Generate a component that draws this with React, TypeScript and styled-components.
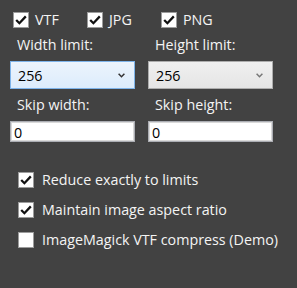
import styled, { createGlobalStyle } from 'styled-components';

const GlobalStyle = createGlobalStyle`
  html, body {
    margin: 0;
    padding: 0;
    background: #424242;
  }
  body {
    font-family: 'Open Sans', 'Noto Sans', sans-serif;
  }
`;

const Panel = styled.div`
  width: 297px;
  height: 288px;
  box-sizing: border-box;
  padding: 12px 0 0 10px;
  background: #424242;
  color: #f4f4f4;
  font-size: 14.3px;
  display: flex;
  flex-direction: column;
`;

const TopChecks = styled.div`
  display: flex;
  padding-left: 3px;
`;

const Check = styled.label<{ $gap: number; $width?: number }>`
  display: flex;
  align-items: center;
  height: 16px;
  line-height: 20px;
  gap: ${(p) => p.$gap}px;
  width: ${(p) => (p.$width ? `${p.$width}px` : 'auto')};
  white-space: nowrap;
`;

const Box = styled.span`
  width: 16px;
  height: 16px;
  box-sizing: border-box;
  border: 1px solid #9c9c9c;
  background: #ffffff;
  display: flex;
  align-items: center;
  justify-content: center;
  flex: none;
`;

const Fields = styled.div`
  display: grid;
  grid-template-columns: 125px 125px;
  column-gap: 13px;
  margin-top: 7px;
`;

const Field = styled.div`
  display: flex;
  flex-direction: column;
`;

const Label = styled.div<{ $top?: number }>`
  line-height: 20px;
  padding-left: 7px;
  margin-top: ${(p) => p.$top ?? 0}px;
  margin-bottom: 6px;
`;

const Combo = styled.div<{ $focused?: boolean }>`
  height: 28px;
  box-sizing: border-box;
  display: flex;
  align-items: center;
  justify-content: space-between;
  padding: 0 9px 0 7px;
  color: #000;
  border: 1px solid ${(p) => (p.$focused ? '#7eb4ea' : '#adadad')};
  background: ${(p) =>
    p.$focused
      ? 'linear-gradient(#ecf4fc, #dcecfc)'
      : 'linear-gradient(#f0f0f0, #e5e5e5)'};
`;

const TextBox = styled.div`
  height: 21px;
  box-sizing: border-box;
  border: 1px solid #abadb3;
  box-shadow: inset 0 0 0 1px #d9d9d9;
  background: #ffffff;
  color: #000;
  padding: 1px 0 0 3px;
  line-height: 20px;
`;

const Options = styled.div`
  display: flex;
  flex-direction: column;
  gap: 14px;
  margin-top: 30px;
  padding-left: 8px;
`;

const Tick = () => (
  <svg width="12" height="10" viewBox="0 0 12 10">
    <path d="M1.2 5 L4.4 8.2 L10.8 1.4" fill="none" stroke="#111" strokeWidth="2.3" />
  </svg>
);

const Chevron = ({ color }: { color: string }) => (
  <svg width="7" height="5" viewBox="0 0 7 5">
    <path d="M0.6 0.8 L3.5 3.7 L6.4 0.8" fill="none" stroke={color} strokeWidth="1.5" />
  </svg>
);

const CheckBox = ({ label, checked, gap, width }: { label: string; checked: boolean; gap: number; width?: number }) => (
  <Check $gap={gap} $width={width}>
    <Box>{checked && <Tick />}</Box>
    {label}
  </Check>
);

export default function App() {
  return (
    <>
      <GlobalStyle />
      <Panel>
        <TopChecks>
          <CheckBox label="VTF" checked gap={6} width={74} />
          <CheckBox label="JPG" checked gap={6} width={74} />
          <CheckBox label="PNG" checked gap={6} width={74} />
        </TopChecks>
        <Fields>
          <Field>
            <Label>Width limit:</Label>
            <Combo $focused>
              256
              <Chevron color="#333" />
            </Combo>
            <Label $top={6}>Skip width:</Label>
            <TextBox>0</TextBox>
          </Field>
          <Field>
            <Label>Height limit:</Label>
            <Combo>
              256
              <Chevron color="#777" />
            </Combo>
            <Label $top={6}>Skip height:</Label>
            <TextBox>0</TextBox>
          </Field>
        </Fields>
        <Options>
          <CheckBox label="Reduce exactly to limits" checked gap={8} />
          <CheckBox label="Maintain image aspect ratio" checked gap={8} />
          <CheckBox label="ImageMagick VTF compress (Demo)" checked={false} gap={8} />
        </Options>
      </Panel>
    </>
  );
}
